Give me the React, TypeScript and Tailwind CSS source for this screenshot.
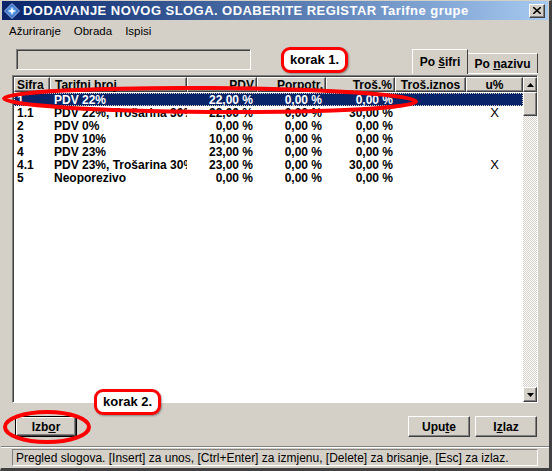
import React from "react";

const rows = [
  { sifra: "1", naziv: "PDV 22%", pdv: "22,00 %", pp: "0,00 %", tros: "0,00 %", iznos: "", u: "", selected: true },
  { sifra: "1.1", naziv: "PDV 22%, Trošarina 30%", pdv: "22,00 %", pp: "0,00 %", tros: "30,00 %", iznos: "", u: "X" },
  { sifra: "2", naziv: "PDV 0%", pdv: "0,00 %", pp: "0,00 %", tros: "0,00 %", iznos: "", u: "" },
  { sifra: "3", naziv: "PDV 10%", pdv: "10,00 %", pp: "0,00 %", tros: "0,00 %", iznos: "", u: "" },
  { sifra: "4", naziv: "PDV 23%", pdv: "23,00 %", pp: "0,00 %", tros: "0,00 %", iznos: "", u: "" },
  { sifra: "4.1", naziv: "PDV 23%, Trošarina 30%", pdv: "23,00 %", pp: "0,00 %", tros: "30,00 %", iznos: "", u: "X" },
  { sifra: "5", naziv: "Neoporezivo", pdv: "0,00 %", pp: "0,00 %", tros: "0,00 %", iznos: "", u: "" },
];

// column template shared by header and rows
const cols = "grid grid-cols-[36px_137px_70px_69px_69px_71px_57px]";

const raised = "border border-t-white border-l-white border-r-[#404040] border-b-[#404040] shadow-[inset_-1px_-1px_0_#808080]";
const sunken = "border border-t-[#808080] border-l-[#808080] border-r-white border-b-white shadow-[inset_1px_1px_0_#404040]";

function Btn({ children, isDefault }: { children: React.ReactNode; isDefault?: boolean }) {
  return (
    <div className={isDefault ? "border border-black" : ""}>
      <div className={`${raised} bg-[#d4d0c8] flex items-center justify-center font-bold text-[12px] text-black ${isDefault ? "w-[60px] h-[19px]" : "w-[62px] h-[21px]"}`}>
        {children}
      </div>
    </div>
  );
}

function Callout({ text }: { text: string }) {
  return (
    <div className="border-[3px] border-[#ff0000] rounded-[9px] bg-white px-[6px] h-[26px] flex items-center font-bold text-[13px] text-black shadow-[1px_1px_2px_rgba(0,0,0,0.35)]">
      {text}
    </div>
  );
}

function HeaderCell({ children, align }: { children?: React.ReactNode; align: string }) {
  return (
    <div className={`${raised} bg-[#d4d0c8] h-[15px] flex items-center px-[2px] text-[12px] font-bold leading-none ${align}`}>
      {children}
    </div>
  );
}

export default function App() {
  return (
    <div className="w-[552px] h-[471px] bg-[#d4d0c8] relative overflow-hidden font-['Liberation_Sans',Arial,sans-serif] text-black border-l border-t border-l-[#d4d0c8] border-t-[#d4d0c8] border-r-[3px] border-b-[3px] border-r-[#404040] border-b-[#404040]">
      <div className="h-full flex flex-col">
        {/* title bar */}
        <div className="h-[19px] mx-[1px] bg-gradient-to-r from-[#0a246a] to-[#a6caf0] flex items-center pl-[2px] pr-[3px]">
          <svg width="16" height="16" viewBox="0 0 16 16" className="shrink-0">
            <defs>
              <radialGradient id="g" cx="50%" cy="50%" r="60%">
                <stop offset="0" stopColor="#7fc4ff" />
                <stop offset="1" stopColor="#0a3aa8" />
              </radialGradient>
            </defs>
            <path d="M8 0.5 L15.5 8 L8 15.5 L0.5 8 Z" fill="url(#g)" stroke="#c8dcff" strokeWidth="0.8" />
            <path d="M8 3.5 L9 7 L12.5 8 L9 9 L8 12.5 L7 9 L3.5 8 L7 7 Z" fill="#fff" />
          </svg>
          <span className="ml-[3px] text-white font-bold text-[13px] tracking-[0.45px] whitespace-nowrap">
            DODAVANJE NOVOG SLOGA. ODABERITE REGISTAR Tarifne grupe
          </span>
          <div className={`${raised} ml-auto w-[16px] h-[14px] bg-[#d4d0c8] flex items-center justify-center`}>
            <svg width="8" height="7" viewBox="0 0 8 7">
              <path d="M0 0 L8 7 M8 0 L0 7" stroke="#000" strokeWidth="1.6" />
            </svg>
          </div>
        </div>

        {/* menu */}
        <div className="h-[20px] pt-[3px] flex items-center gap-[13px] pl-[8px] text-[11.5px]">
          <span>Ažuriranje</span>
          <span>Obrada</span>
          <span>Ispisi</span>
        </div>

        {/* top row */}
        <div className="mt-[9px] flex items-start pl-[15px] h-[26px]">
          <div className={`${sunken} w-[235px] h-[21px] bg-[#d4d0c8]`} />
          <div className="ml-[30px] -mt-[2px]">
            <Callout text="korak 1." />
          </div>
          <div className="ml-auto mr-[11px] flex items-end h-[25px]">
            <div className="border-t border-l border-t-white border-l-white border-r border-r-[#404040] bg-[#d4d0c8] h-[25px] w-[56px] flex items-center justify-center text-[12px] font-bold -mr-[1px] z-10">
              <span>Po <u>š</u>ifri</span>
            </div>
            <div className="flex flex-col">
              <div className="border-t border-l border-t-white border-l-white border-r border-r-[#404040] bg-[#d4d0c8] h-[20px] w-[71px] flex items-center justify-center text-[12px] font-bold">
                <span>Po <u>n</u>azivu</span>
              </div>
              <div className="h-[1px] bg-white" />
            </div>
          </div>
        </div>

        {/* table */}
        <div className={`${sunken} mx-[11px] h-[328px] bg-white flex`}>
          <div className="flex-1 flex flex-col pt-[1px] pl-[1px]">
            <div className={cols}>
              <HeaderCell align="justify-start">Sifra</HeaderCell>
              <HeaderCell align="justify-start pl-[4px]">Tarifni broj</HeaderCell>
              <HeaderCell align="justify-end">PDV</HeaderCell>
              <HeaderCell align="justify-end">Porpotr.</HeaderCell>
              <HeaderCell align="justify-end">Troš.%</HeaderCell>
              <HeaderCell align="justify-center">Troš.iznos</HeaderCell>
              <HeaderCell align="justify-center">u%</HeaderCell>
            </div>
            <div className="mt-[1px] flex flex-col">
              {rows.map((r) => (
                <div
                  key={r.sifra}
                  className={`${cols} h-[13px] items-center text-[12px] font-bold leading-none whitespace-nowrap ${
                    r.selected ? "bg-[#0a246a] text-white outline outline-1 outline-dotted outline-[#d4d0c8] -outline-offset-1" : ""
                  }`}
                >
                  <div className="pl-[3px]">{r.sifra}</div>
                  <div className="pl-[4px] overflow-hidden">{r.naziv}</div>
                  <div className="text-right pr-[4px]">{r.pdv}</div>
                  <div className="text-right pr-[4px]">{r.pp}</div>
                  <div className="text-right pr-[2px]">{r.tros}</div>
                  <div className="text-right pr-[4px]">{r.iznos}</div>
                  <div className="text-center font-normal text-[13px]">{r.u}</div>
                </div>
              ))}
            </div>
          </div>
          {/* scrollbar */}
          <div className="w-[16px] flex flex-col pt-[1px]">
            <div className={`${raised} h-[15px] bg-[#d4d0c8] flex items-center justify-center`}>
              <svg width="7" height="4" viewBox="0 0 7 4"><path d="M3.5 0 L7 4 L0 4 Z" fill="#000" /></svg>
            </div>
            <div className={`${raised} h-[24px] bg-[#d4d0c8]`} />
            <div className="flex-1 bg-[repeating-conic-gradient(#d4d0c8_0_25%,#ffffff_0_50%)] bg-[length:2px_2px]" />
            <div className={`${raised} h-[15px] bg-[#d4d0c8] flex items-center justify-center`}>
              <svg width="7" height="4" viewBox="0 0 7 4"><path d="M0 0 L7 0 L3.5 4 Z" fill="#000" /></svg>
            </div>
          </div>
        </div>

        {/* buttons */}
        <div className="mt-[13px] flex items-center pl-[14px] pr-[12px]">
          <Btn isDefault>
            <span>Izb<u>o</u>r</span>
          </Btn>
          <div className="ml-auto flex gap-[5px]">
            <Btn>
              <span>Upu<u>t</u>e</span>
            </Btn>
            <Btn>
              <span>I<u>z</u>laz</span>
            </Btn>
          </div>
        </div>

        {/* status bar */}
        <div className="mt-[9px] border-t border-t-[#808080] shadow-[0_1px_0_white]" />
        <div className={`mt-[2px] mx-[11px] h-[17px] border border-t-[#808080] border-l-[#808080] border-r-white border-b-white flex items-center pl-[3px] text-[12px] whitespace-nowrap overflow-hidden`}>
          Pregled slogova. [Insert] za unos, [Ctrl+Enter] za izmjenu, [Delete] za brisanje, [Esc] za izlaz.
        </div>
      </div>

      {/* annotations drawn over the dialog */}
      <div className="absolute left-[93px] top-[388px]">
        <Callout text="korak 2." />
      </div>
      <svg className="absolute left-0 top-0 pointer-events-none" width="552" height="471">
        <ellipse cx="209" cy="99" rx="206" ry="12" fill="none" stroke="#ff0000" strokeWidth="4" transform="rotate(0.4 209 99)" />
        <ellipse cx="46" cy="426" rx="42" ry="15" fill="none" stroke="#ff0000" strokeWidth="4" />
      </svg>
    </div>
  );
}
